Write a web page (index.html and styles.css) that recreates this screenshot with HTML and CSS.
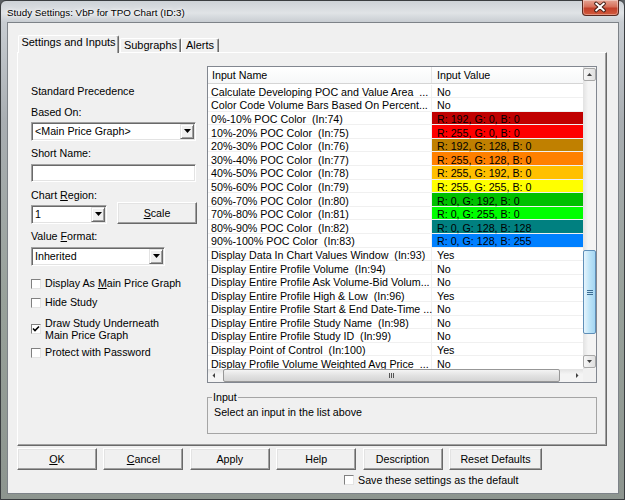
FILE: index.html
```html
<!DOCTYPE html>
<html>
<head>
<meta charset="utf-8">
<title>Study Settings</title>
<link rel="stylesheet" href="styles.css">
</head>
<body>
<div class="window">
  <div class="titlebar">
    <span class="title">Study Settings: VbP for TPO Chart (ID:3)</span>
    <div class="close">
      <svg width="37" height="16" viewBox="0 0 37 16">
        <path d="M14.5 4.5 L22.5 11.5 M22.5 4.5 L14.5 11.5" stroke="#3b1a12" stroke-width="4" stroke-linecap="round"/>
        <path d="M14.5 4.5 L22.5 11.5 M22.5 4.5 L14.5 11.5" stroke="#ffffff" stroke-width="2" stroke-linecap="round"/>
      </svg>
    </div>
  </div>
  <div class="client">
    <div class="tabs">
      <div class="tab active">Settings and Inputs</div>
      <div class="tab t-sub">Subgraphs</div>
      <div class="tab t-alerts">Alerts</div>
    </div>
    <div class="panel">
      <div class="left">
        <div class="label l-std">Standard Precedence</div>
        <div class="label l-based">Based On:</div>
        <div class="combo c-based">
          <div class="combo-text">&lt;Main Price Graph&gt;</div>
          <div class="combo-btn"><svg width="7" height="4" viewBox="0 0 7 4"><polygon points="0,0 7,0 3.5,4" fill="#000"/></svg></div>
        </div>
        <div class="label l-short">Short Name:</div>
        <div class="field"></div>
        <div class="label l-region">Chart <u>R</u>egion:</div>
        <div class="region-row">
          <div class="combo c-region">
            <div class="combo-text">1</div>
            <div class="combo-btn"><svg width="7" height="4" viewBox="0 0 7 4"><polygon points="0,0 7,0 3.5,4" fill="#000"/></svg></div>
          </div>
          <div class="btn btn-scale"><u>S</u>cale</div>
        </div>
        <div class="label l-format">Value <u>F</u>ormat:</div>
        <div class="combo c-format">
          <div class="combo-text">Inherited</div>
          <div class="combo-btn"><svg width="7" height="4" viewBox="0 0 7 4"><polygon points="0,0 7,0 3.5,4" fill="#000"/></svg></div>
        </div>
        <div class="check ch-1"><span class="box"></span><span>Display As <u>M</u>ain Price Graph</span></div>
        <div class="check ch-2"><span class="box"></span><span>Hide Study</span></div>
        <div class="check ch-3"><span class="box"><svg width="8" height="8" viewBox="0 0 8 8"><path d="M1 3.5 L3 5.5 L7 1.5" stroke="#000" stroke-width="1.6" fill="none"/></svg></span><span class="two">Draw Study Underneath<br>Main Price Graph</span></div>
        <div class="check ch-4"><span class="box"></span><span>Protect with Password</span></div>
      </div>
      <div class="right">
        <div class="listbox">
          <div class="list-main">
            <div class="list-header">
              <div class="hcell hname">Input Name</div>
              <div class="hcell hvalue">Input Value</div>
            </div>
            <div class="rows">
              <div class="row"><div class="name">Calculate Developing POC and Value Area  ...</div><div class="value">No</div></div>
              <div class="row"><div class="name">Color Code Volume Bars Based On Percent...</div><div class="value">No</div></div>
              <div class="row"><div class="name">0%-10% POC Color  (In:74)</div><div class="value sw-1">R: 192, G: 0, B: 0</div></div>
              <div class="row"><div class="name">10%-20% POC Color  (In:75)</div><div class="value sw-2">R: 255, G: 0, B: 0</div></div>
              <div class="row"><div class="name">20%-30% POC Color  (In:76)</div><div class="value sw-3">R: 192, G: 128, B: 0</div></div>
              <div class="row"><div class="name">30%-40% POC Color  (In:77)</div><div class="value sw-4">R: 255, G: 128, B: 0</div></div>
              <div class="row"><div class="name">40%-50% POC Color  (In:78)</div><div class="value sw-5">R: 255, G: 192, B: 0</div></div>
              <div class="row"><div class="name">50%-60% POC Color  (In:79)</div><div class="value sw-6">R: 255, G: 255, B: 0</div></div>
              <div class="row"><div class="name">60%-70% POC Color  (In:80)</div><div class="value sw-7">R: 0, G: 192, B: 0</div></div>
              <div class="row"><div class="name">70%-80% POC Color  (In:81)</div><div class="value sw-8">R: 0, G: 255, B: 0</div></div>
              <div class="row"><div class="name">80%-90% POC Color  (In:82)</div><div class="value sw-9">R: 0, G: 128, B: 128</div></div>
              <div class="row"><div class="name">90%-100% POC Color  (In:83)</div><div class="value sw-10">R: 0, G: 128, B: 255</div></div>
              <div class="row"><div class="name">Display Data In Chart Values Window  (In:93)</div><div class="value">Yes</div></div>
              <div class="row"><div class="name">Display Entire Profile Volume  (In:94)</div><div class="value">No</div></div>
              <div class="row"><div class="name">Display Entire Profile Ask Volume-Bid Volum...</div><div class="value">No</div></div>
              <div class="row"><div class="name">Display Entire Profile High &amp; Low  (In:96)</div><div class="value">Yes</div></div>
              <div class="row"><div class="name">Display Entire Profile Start &amp; End Date-Time ...</div><div class="value">No</div></div>
              <div class="row"><div class="name">Display Entire Profile Study Name  (In:98)</div><div class="value">No</div></div>
              <div class="row"><div class="name">Display Entire Profile Study ID  (In:99)</div><div class="value">No</div></div>
              <div class="row"><div class="name">Display Point of Control  (In:100)</div><div class="value">Yes</div></div>
              <div class="row"><div class="name">Display Profile Volume Weighted Avg Price  ...</div><div class="value">No</div></div>
            </div>
          </div>
          <div class="vscroll">
            <div class="vbtn"><svg width="11" height="11" viewBox="0 0 11 11"><polygon points="3,7 8,7 5.5,4" fill="#404040"/></svg></div>
            <div class="vtrack">
              <div class="vthumb"><span></span><span></span><span></span></div>
            </div>
            <div class="vbtn"><svg width="11" height="11" viewBox="0 0 11 11"><polygon points="3,4 8,4 5.5,7" fill="#404040"/></svg></div>
          </div>
          <div class="hscroll">
            <div class="hbtn"><svg width="13" height="13" viewBox="0 0 13 13"><polygon points="7,4 7,9 4.5,6.5" fill="#404040"/></svg></div>
            <div class="htrack">
              <div class="hthumb"><span></span><span></span><span></span></div>
            </div>
            <div class="hbtn"><svg width="13" height="13" viewBox="0 0 13 13"><polygon points="6,4 6,9 8.5,6.5" fill="#404040"/></svg></div>
          </div>
          <div class="corner"></div>
        </div>
        <fieldset class="group">
          <legend>Input</legend>
          <div class="group-text">Select an input in the list above</div>
        </fieldset>
      </div>
    </div>
    <div class="buttons">
      <div class="btn"><u>O</u>K</div>
      <div class="btn"><u>C</u>ancel</div>
      <div class="btn">Apply</div>
      <div class="btn">Help</div>
      <div class="btn">Description</div>
      <div class="btn btn-wide">Reset Defaults</div>
    </div>
    <div class="save"><span class="box"></span><span>Save these settings as the default</span></div>
  </div>
</div>
</body>
</html>
```

FILE: styles.css
```css
* { box-sizing: border-box; }
html, body { margin: 0; padding: 0; }
body {
  width: 625px;
  height: 500px;
  overflow: hidden;
  background: #5a5f63;
  font-family: "Liberation Sans", Arial, sans-serif;
  font-size: 10.7px;
  color: #000;
}
u { text-decoration: underline; text-underline-offset: 1px; }

.window {
  width: 625px;
  height: 500px;
  display: flex;
  flex-direction: column;
  padding: 0 5px 5px 6px;
  border: 1px solid #3a3d40;
  border-radius: 6px 6px 0 0;
  background: linear-gradient(to bottom, #cdd2d7 0, #e0e3e6 12px, #c8cdd2 21px, #a9aeb2 120px, #98a19a 300px, #8d958f 100%);
}

.titlebar {
  height: 21px;
  display: flex;
  align-items: flex-start;
  flex: none;
}
.title {
  padding-top: 5px;
  line-height: 13px;
  font-size: 9.8px;
  color: #000;
  text-shadow: 0 0 6px #fff, 0 0 3px #fff;
}
.close {
  margin-left: auto;
  margin-top: -1px;
  width: 37px;
  height: 16px;
  border: 1px solid #5a2a20;
  border-top: none;
  border-radius: 0 0 4px 4px;
  background: linear-gradient(to bottom, #e6a594 0, #d6705a 45%, #c2402a 55%, #d35b3d 100%);
  box-shadow: inset 0 0 0 1px rgba(255,255,255,0.35);
  display: flex;
}
.close svg { display: block; margin: -1px 0 0 -1px; }

.client {
  flex: 1;
  border: 1px solid #7d8288;
  background: #f0f0f0;
  padding: 12px 0 0 9px;
  display: flex;
  flex-direction: column;
}

/* tabs */
.tabs {
  display: flex;
  align-items: flex-end;
  height: 18px;
  margin-left: 1px;
  margin-bottom: -1px;
  position: relative;
  z-index: 1;
}
.tab {
  height: 14px;
  margin-bottom: 1px;
  line-height: 13px;
  text-align: center;
  background: #f0f0f0;
  border-top: 1px solid #fff;
  border-left: 1px solid #fff;
  border-right: 1px solid #696969;
  box-shadow: inset -1px 0 #a0a0a0;
  border-radius: 2px 2px 0 0;
  white-space: nowrap;
}
.tab.active {
  width: 101px;
  height: 18px;
  margin-bottom: 0;
  line-height: 12px;
  font-size: 11px;
}
.t-sub { width: 61px; margin-left: 1px; font-size: 11px; }
.t-alerts { width: 38px; font-size: 11px; }

.panel {
  width: 590px;
  height: 394px;
  flex: none;
  background: #f0f0f0;
  border: 1px solid;
  border-color: #fff #696969 #696969 #fff;
  box-shadow: inset -1px -1px #a0a0a0;
  display: grid;
  grid-template-columns: 166px 390px;
  column-gap: 10px;
  align-items: start;
  padding: 13px 9px 0 13px;
}

/* left column */
.left { display: flex; flex-direction: column; align-items: flex-start; }
.label { line-height: 13px; height: 13px; white-space: nowrap; }
.l-std { margin-top: 18.5px; }
.l-based { margin-top: 8.5px; }
.c-based { margin-top: 2.5px; width: 165px; }
.l-short { margin-top: 6.5px; }
.field {
  margin-top: 3.5px;
  width: 165px;
  height: 18px;
  background: #fff;
  border: 1px solid;
  border-color: #a0a0a0 #fff #fff #a0a0a0;
  box-shadow: inset 1px 1px #696969, inset -1px -1px #e3e3e3;
}
.l-region { margin-top: 7.5px; }
.region-row { display: flex; align-items: flex-start; width: 166px; }
.c-region { margin-top: 2.5px; width: 77px; }
.btn-scale { margin-left: 10px; width: 79px; }
.l-format { margin-top: 6px; }
.c-format { margin-top: 3.5px; width: 134px; height: 18px; }

.combo {
  height: 19px;
  display: flex;
  background: #fff;
  border: 1px solid;
  border-color: #a0a0a0 #fff #fff #a0a0a0;
  box-shadow: inset 1px 1px #696969, inset -1px -1px #e3e3e3;
  padding: 1px;
}
.combo-text {
  flex: 1;
  padding-left: 2px;
  line-height: 15px;
  white-space: nowrap;
  overflow: hidden;
}
.combo-btn {
  width: 14px;
  flex: none;
  background: #f0f0f0;
  border: 1px solid;
  border-color: #e3e3e3 #696969 #696969 #e3e3e3;
  box-shadow: inset 1px 1px #fff, inset -1px -1px #a0a0a0;
  display: flex;
  align-items: center;
  justify-content: center;
}
.combo-btn svg { display: block; }

.check { display: flex; align-items: center; white-space: nowrap; line-height: 13px; }
.check .box, .save .box {
  width: 10px;
  height: 10px;
  flex: none;
  margin-right: 4px;
  background: #fff;
  border: 1px solid;
  border-color: #808080 #e3e3e3 #e3e3e3 #808080;
  display: flex;
  align-items: center;
  justify-content: center;
}
.check .box svg { display: block; }
.ch-1 { margin-top: 11.5px; }
.ch-2 { margin-top: 6px; }
.ch-3 { margin-top: 7.5px; }
.ch-3 .two { line-height: 12px; }
.ch-4 { margin-top: 5.5px; }

/* buttons */
.btn {
  width: 80px;
  height: 22px;
  flex: none;
  background: #f0f0f0;
  border: 1px solid;
  border-color: #fff #696969 #696969 #fff;
  box-shadow: inset -1px -1px #a0a0a0, inset 1px 1px #e3e3e3;
  text-align: center;
  line-height: 20px;
  white-space: nowrap;
}
.btn-wide { width: 93px; }
.buttons {
  display: flex;
  gap: 6.4px;
  margin-top: 2px;
}
.save {
  display: flex;
  align-items: center;
  margin-top: 3.5px;
  margin-left: 327px;
  line-height: 13px;
}

/* list */
.right { display: flex; flex-direction: column; }
.listbox {
  width: 390px;
  height: 317px;
  border: 1px solid #828790;
  background: #fff;
  display: grid;
  grid-template-columns: 375px 13px;
  grid-template-rows: 302px 13px;
}
.list-main { overflow: hidden; display: flex; flex-direction: column; }
.list-header {
  height: 17px;
  flex: none;
  display: flex;
  border-bottom: 1px solid #d5d5d5;
  background: linear-gradient(#ffffff, #f6f7f8);
}
.hcell { line-height: 16px; white-space: nowrap; }
.hname { width: 224px; padding-left: 4px; border-right: 1px solid #e5e5e5; }
.hvalue { padding-left: 5px; }

.rows { flex: 1; overflow: hidden; padding-top: 0.5px; }
.row {
  height: 13.6px;
  display: flex;
  border-bottom: 1px solid #f0f0f0;
}
.name {
  width: 224px;
  flex: none;
  padding-left: 3px;
  padding-top: 1.3px;
  line-height: 12px;
  white-space: pre;
  clip-path: inset(-3px 0 -3px 0);
  border-right: 1px solid #f0f0f0;
}
.value {
  flex: 1;
  padding-left: 5px;
  padding-top: 1.3px;
  line-height: 12px;
  white-space: nowrap;
}
.sw-1 { background: #c00000; }
.sw-2 { background: #ff0000; }
.sw-3 { background: #c08000; }
.sw-4 { background: #ff8000; }
.sw-5 { background: #ffc000; }
.sw-6 { background: #ffff00; }
.sw-7 { background: #00c000; }
.sw-8 { background: #00ff00; }
.sw-9 { background: #008080; }
.sw-10 { background: #0080ff; }

.vscroll {
  display: flex;
  flex-direction: column;
  background: linear-gradient(to right, #e2e2e2, #f4f4f4 40%, #f4f4f4);
}
.vbtn {
  height: 13px;
  flex: none;
  margin: 1px 0 0 0;
  border: 1px solid #a8a8a8;
  border-radius: 2px;
  background: linear-gradient(to right, #f6f6f6, #e0e0e0);
  display: flex;
  align-items: center;
  justify-content: center;
}
.vbtn:last-child { margin: 0 0 1px 0; }
.vtrack { flex: 1; padding-top: 169px; }
.vthumb {
  height: 84px;
  border: 1px solid #5f8fb8;
  border-radius: 2px;
  background: linear-gradient(to right, #e6f4fc, #bde4f8 50%, #a4d6f3);
  display: flex;
  flex-direction: column;
  align-items: center;
  justify-content: center;
  gap: 1px;
}
.vthumb span { width: 6px; height: 1px; background: #3d6d94; }

.hscroll {
  display: flex;
  background: linear-gradient(to bottom, #e2e2e2, #f4f4f4 40%, #f4f4f4);
}
.hbtn {
  width: 13px;
  flex: none;
  display: flex;
  align-items: center;
  justify-content: center;
}
.htrack { flex: 1; padding-left: 2px; }
.hthumb {
  width: 337px;
  height: 13px;
  border: 1px solid #979797;
  border-radius: 2px;
  background: linear-gradient(to bottom, #f4f4f4, #e2e2e2 50%, #d4d4d4);
  display: flex;
  align-items: center;
  justify-content: center;
  gap: 1px;
}
.hthumb span { width: 1px; height: 5px; background: #555; }
.corner { background: #f0f0f0; }

.group {
  margin: 7.5px 0 0 0;
  height: 43px;
  width: 390px;
  padding: 0 5px 0 5px;
  border: 1px solid #a5a5a5;
  min-width: 0;
}
.group legend {
  padding: 0 1px;
  margin-left: -1px;
  line-height: 13px;
}
.group-text { margin-top: 2px; line-height: 13px; padding-left: 1px; }
```
